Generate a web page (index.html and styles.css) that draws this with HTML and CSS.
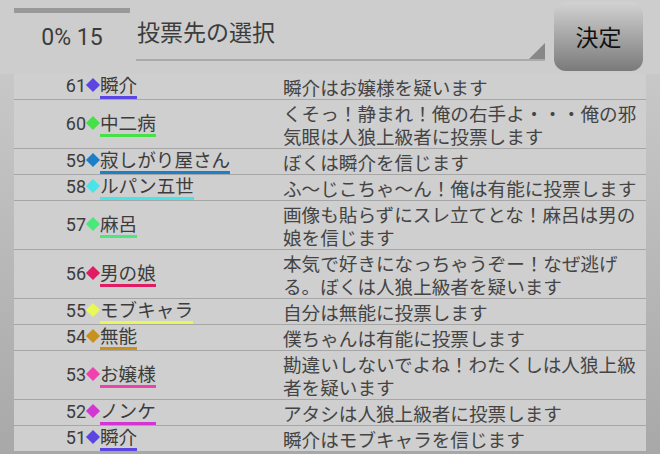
FILE: index.html
```html
<!DOCTYPE html>
<html lang="ja">
<head>
    <meta charset="UTF-8">
    <title>投票先の選択</title>
    <link rel="stylesheet" href="styles.css">
</head>
<body>
    <div class="header">
        <div class="progress">
            <div class="bar"></div>
            <div class="count">0% 15</div>
        </div>
        <div class="select">
            投票先の選択
            <span class="arrow"></span>
        </div>
        <div class="decide">決定</div>
    </div>

    <div class="list">
        <div class="row">
            <div class="who"><div class="tag"><span class="num">61</span><span class="mark" style="background:#5b46e4"></span><span class="name" style="border-color:#5b46e4">瞬介</span></div></div>
            <div class="msg">瞬介はお嬢様を疑います</div>
        </div>
        <div class="row">
            <div class="who"><div class="tag"><span class="num">60</span><span class="mark" style="background:#48e048"></span><span class="name" style="border-color:#48e048">中二病</span></div></div>
            <div class="msg">くそっ！静まれ！俺の右手よ・・・俺の邪気眼は人狼上級者に投票します</div>
        </div>
        <div class="row">
            <div class="who"><div class="tag"><span class="num">59</span><span class="mark" style="background:#1c80c8"></span><span class="name" style="border-color:#1c80c8">寂しがり屋さん</span></div></div>
            <div class="msg">ぼくは瞬介を信じます</div>
        </div>
        <div class="row">
            <div class="who"><div class="tag"><span class="num">58</span><span class="mark" style="background:#48e4e8"></span><span class="name" style="border-color:#48e4e8">ルパン五世</span></div></div>
            <div class="msg">ふ〜じこちゃ〜ん！俺は有能に投票します</div>
        </div>
        <div class="row">
            <div class="who"><div class="tag"><span class="num">57</span><span class="mark" style="background:#48e87c"></span><span class="name" style="border-color:#48e87c">麻呂</span></div></div>
            <div class="msg">画像も貼らずにスレ立てとな！麻呂は男の娘を信じます</div>
        </div>
        <div class="row">
            <div class="who"><div class="tag"><span class="num">56</span><span class="mark" style="background:#e01c64"></span><span class="name" style="border-color:#e01c64">男の娘</span></div></div>
            <div class="msg">本気で好きになっちゃうぞー！なぜ逃げる。ぼくは人狼上級者を疑います</div>
        </div>
        <div class="row">
            <div class="who"><div class="tag"><span class="num">55</span><span class="mark" style="background:#e8f858"></span><span class="name" style="border-color:#e8f858">モブキャラ</span></div></div>
            <div class="msg">自分は無能に投票します</div>
        </div>
        <div class="row">
            <div class="who"><div class="tag"><span class="num">54</span><span class="mark" style="background:#c8901c"></span><span class="name" style="border-color:#c8901c">無能</span></div></div>
            <div class="msg">僕ちゃんは有能に投票します</div>
        </div>
        <div class="row">
            <div class="who"><div class="tag"><span class="num">53</span><span class="mark" style="background:#f040b0"></span><span class="name" style="border-color:#f040b0">お嬢様</span></div></div>
            <div class="msg">勘違いしないでよね！わたくしは人狼上級者を疑います</div>
        </div>
        <div class="row">
            <div class="who"><div class="tag"><span class="num">52</span><span class="mark" style="background:#d434d4"></span><span class="name" style="border-color:#d434d4">ノンケ</span></div></div>
            <div class="msg">アタシは人狼上級者に投票します</div>
        </div>
        <div class="row">
            <div class="who"><div class="tag"><span class="num">51</span><span class="mark" style="background:#5b46e4"></span><span class="name" style="border-color:#5b46e4">瞬介</span></div></div>
            <div class="msg">瞬介はモブキャラを信じます</div>
        </div>
    </div>
</body>
</html>
```

FILE: styles.css
```css
body {
    margin: 0;
    width: 660px;
    height: 454px;
    overflow: hidden;
    background: linear-gradient(#cecece, #a8a8a8);
    font-family: Roboto, "Noto Sans CJK JP", sans-serif;
    color: #3c3c3c;
}

.header {
    display: flex;
    height: 74px;
    padding-left: 14px;
    box-sizing: border-box;
    background: #cdcdcd;
}

.progress {
    width: 116px;
    padding-top: 8px;
}

.bar {
    height: 5px;
    background: #999;
}

.count {
    margin-top: 10px;
    line-height: 30px;
    font-size: 23px;
    text-align: center;
}

.select {
    position: relative;
    width: 409px;
    height: 61px;
    margin-left: 6px;
    padding: 16px 0 0 1px;
    box-sizing: border-box;
    border-bottom: 2px solid #aaa;
    font-family: "Noto Sans CJK JP", sans-serif;
    font-size: 23px;
    line-height: 30px;
}

.arrow {
    position: absolute;
    right: 0;
    bottom: 0;
    border-left: 16px solid transparent;
    border-bottom: 16px solid #888;
}

.decide {
    width: 89px;
    height: 69px;
    margin: 2px 0 0 9px;
    border-radius: 12px;
    background: linear-gradient(#d2d2d2, #7a7a7a);
    font-family: "Noto Sans CJK JP", sans-serif;
    font-size: 23px;
    line-height: 69px;
    text-align: center;
    color: #111;
}

.list {
    margin: 0 14px;
    background: #cfcfcf;
}

.row {
    display: flex;
    padding: 1px 0;
    border-bottom: 1px solid #a6a6a6;
}

.who {
    display: flex;
    align-items: center;
    width: 269px;
}

.tag {
    height: 25px;
    margin: -1px 0;
    font-family: "Noto Sans CJK JP", sans-serif;
    font-size: 18.6px;
    line-height: 20px;
    white-space: nowrap;
}

.num {
    display: inline-block;
    width: 72px;
    text-align: right;
    font-family: Roboto, sans-serif;
    font-size: 18px;
}

.mark {
    display: inline-block;
    width: 10px;
    height: 10px;
    margin: 0 2px;
    vertical-align: 1.6px;
    transform: rotate(45deg);
}

.name {
    display: inline-block;
    padding-bottom: 2px;
    border-bottom: 3px solid;
}

.msg {
    flex: 1;
    font-family: "Noto Sans CJK JP", sans-serif;
    font-size: 18.6px;
    line-height: 23px;
    color: #444;
}
```
